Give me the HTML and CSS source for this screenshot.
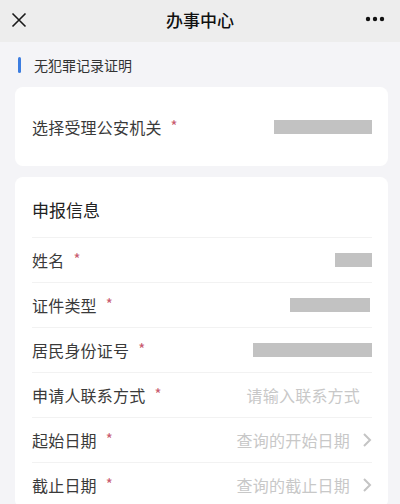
FILE: index.html
```html
<!DOCTYPE html>
<html lang="zh-CN">
<head>
<meta charset="utf-8">
<link rel="stylesheet" href="styles.css">
</head>
<body>
<header class="navbar">
  <svg class="nav-close" width="16" height="16" viewBox="0 0 16 16"><path d="M1.5 1.5 L14.5 14.5 M14.5 1.5 L1.5 14.5" stroke="#1a1a1a" stroke-width="1.6" fill="none"/></svg>
  <div class="nav-title">办事中心</div>
  <svg class="nav-more" width="20" height="6" viewBox="0 0 20 6"><circle cx="3" cy="3" r="2.2" fill="#111"/><circle cx="10" cy="3" r="2.2" fill="#111"/><circle cx="17" cy="3" r="2.2" fill="#111"/></svg>
</header>
<main class="page">
  <div class="section-title"><span class="bar"></span><span>无犯罪记录证明</span></div>
  <section class="card card-single">
    <div class="row row-plain">
      <div class="label">选择受理公安机关<span class="req">*</span></div>
      <div class="mask" style="width:98px"></div>
    </div>
  </section>
  <section class="card">
    <div class="card-head">申报信息</div>
    <div class="row">
      <div class="label">姓名<span class="req">*</span></div>
      <div class="mask" style="width:37px"></div>
    </div>
    <div class="row">
      <div class="label">证件类型<span class="req">*</span></div>
      <div class="mask mask-s" style="width:80px"></div>
    </div>
    <div class="row">
      <div class="label">居民身份证号<span class="req">*</span></div>
      <div class="mask" style="width:119px"></div>
    </div>
    <div class="row">
      <div class="label">申请人联系方式<span class="req">*</span></div>
      <div class="placeholder pad-r">请输入联系方式</div>
    </div>
    <div class="row">
      <div class="label">起始日期<span class="req">*</span></div>
      <div class="value-arrow"><span class="placeholder">查询的开始日期</span>
        <svg class="chev" width="10" height="16" viewBox="0 0 10 16"><path d="M2 2 L8 8 L2 14" stroke="#c4c4c4" stroke-width="2" fill="none"/></svg></div>
    </div>
    <div class="row">
      <div class="label">截止日期<span class="req">*</span></div>
      <div class="value-arrow"><span class="placeholder">查询的截止日期</span>
        <svg class="chev" width="10" height="16" viewBox="0 0 10 16"><path d="M2 2 L8 8 L2 14" stroke="#c4c4c4" stroke-width="2" fill="none"/></svg></div>
    </div>
  </section>
</main>
</body>
</html>
```
FILE: styles.css
```css
* { box-sizing: border-box; }
html, body { margin: 0; padding: 0; }
body {
  width: 400px;
  height: 504px;
  overflow: hidden;
  background: #f4f4f7;
  font-family: "Noto Sans CJK SC", "Noto Sans", sans-serif;
  color: #333;
}
.navbar {
  height: 42px;
  background: #ededed;
  display: flex;
  align-items: center;
  justify-content: space-between;
  padding: 0 15px 0 11px;
  position: relative;
}
.nav-close { display: block; margin-top: -2px; }
.nav-title {
  position: absolute;
  left: 0; right: 0;
  text-align: center;
  font-size: 17px;
  font-weight: 500;
  color: #111;
  line-height: 42px;
  margin-top: -3px;
  pointer-events: none;
}
.nav-more { display: block; margin-top: -4px; }
.page { padding: 0 12px 0 15px; }
.section-title {
  height: 45px;
  display: flex;
  align-items: center;
  font-size: 14px;
  color: #333;
  padding-left: 3px;
  padding-top: 1px;
}
.bar {
  width: 3px;
  height: 16px;
  background: #3c7de0;
  border-radius: 2px;
  margin-right: 13px;
}
.card {
  background: #fff;
  border-radius: 8px;
  padding: 0 16px 0 17px;
  margin-bottom: 11px;
}
.card-single { height: 79px; display: flex; align-items: center; }
.card-single .row { flex: 1; border: none; height: auto; }
.card-head {
  height: 61px;
  display: flex;
  align-items: center;
  font-size: 17px;
  color: #222;
  padding-top: 4px;
  border-bottom: 1px solid #f2f2f2;
}
.row {
  height: 45px;
  display: flex;
  align-items: center;
  justify-content: space-between;
  border-bottom: 1px solid #f2f2f2;
}
.label {
  font-size: 16px;
  color: #3a3a3a;
  letter-spacing: 0.2px;
}
.req {
  color: #c85a6e;
  font-size: 15px;
  margin-left: 9px;
  position: relative;
  top: -2px;
}
.mask {
  height: 14px;
  background: #c2c2c2;
}
.mask-s { margin-right: 2px; }
.placeholder {
  font-size: 16px;
  color: #c8c8c8;
  letter-spacing: 0.2px;
}
.pad-r { margin-right: 12px; }
.value-arrow { display: flex; align-items: center; }
.chev { margin-left: 12px; display: block; }
```
